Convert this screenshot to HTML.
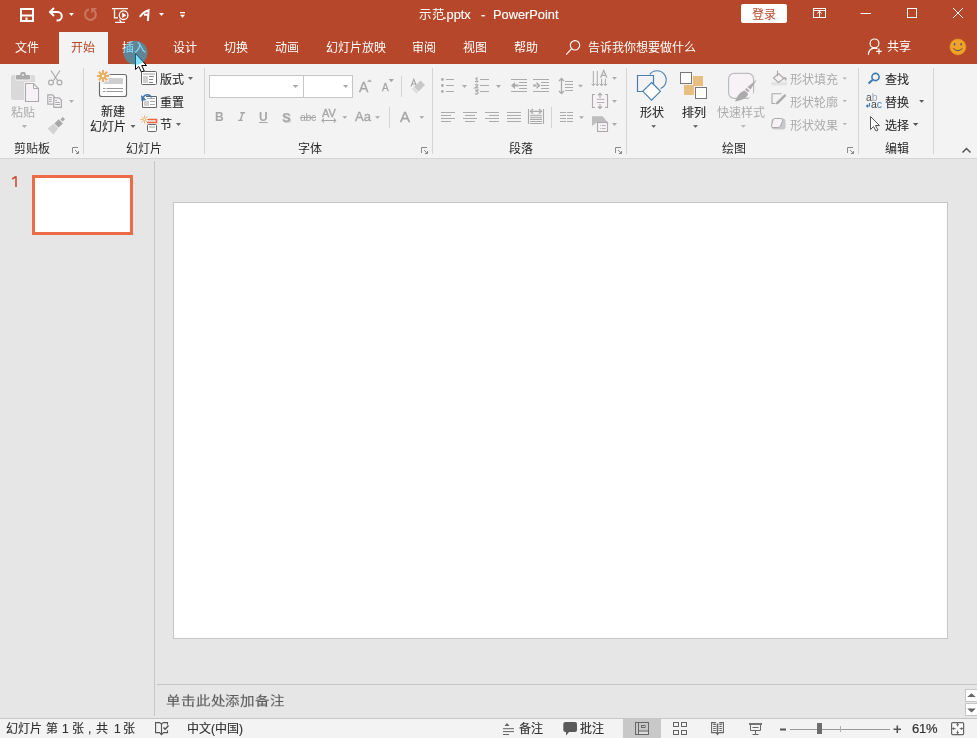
<!DOCTYPE html>
<html lang="zh-CN">
<head>
<meta charset="utf-8">
<style>
*{margin:0;padding:0;box-sizing:border-box}
html,body{width:977px;height:738px;overflow:hidden;background:#e6e6e6;font-family:"Liberation Sans",sans-serif;position:relative}
.a{position:absolute}
.t{position:absolute;white-space:nowrap;line-height:1;will-change:transform}
#ov{position:absolute;left:0;top:0;width:977px;height:738px;overflow:visible}
.tab{color:#fff;font-size:12px;top:42px}
.gl{font-size:12px;color:#2b2b2b;top:143px}
.rb{font-size:12px;color:#2b2b2b;-webkit-text-stroke:0.12px}
.dis{font-size:12px;color:#ababab}
.st{font-size:12px;color:#333;top:723px;-webkit-text-stroke:0.15px}
</style>
</head>
<body>
<!-- panels -->
<div class="a" style="left:0;top:0;width:977px;height:64px;background:#b7472a"></div>
<div class="a" style="left:0;top:64px;width:977px;height:95px;background:#f3f3f3;border-bottom:1px solid #d5d5d5"></div>
<div class="a" style="left:59px;top:32px;width:49px;height:33px;background:#f3f3f3"></div>
<div class="a" style="left:741px;top:4px;width:46px;height:19px;background:#fff;border-radius:2px"></div>

<!-- slide pane -->
<div class="a" style="left:154px;top:161px;width:1px;height:555px;background:#c6c6c6"></div>
<div class="a" style="left:32px;top:175px;width:101px;height:60px;background:#fff;border:3px solid #ee6b48"></div>
<div class="a" style="left:173px;top:202px;width:775px;height:437px;background:#fff;border:1px solid #c6c6c6"></div>
<div class="a" style="left:157px;top:684px;width:820px;height:1px;background:#c6c6c6"></div>
<div class="a" style="left:0;top:718px;width:977px;height:20px;background:#f3f3f3;border-top:1px solid #c6c6c6"></div>
<div class="a" style="left:623px;top:719px;width:38px;height:19px;background:#c8c8c8"></div>
<!-- notes scroll buttons -->
<div class="a" style="left:965px;top:689px;width:13px;height:13px;background:#fff;border:1px solid #c6c6c6"></div>
<div class="a" style="left:965px;top:703px;width:13px;height:13px;background:#fff;border:1px solid #c6c6c6"></div>
<!-- ribbon inputs -->
<div class="a" style="left:209px;top:75px;width:95px;height:23px;background:#fff;border:1px solid #c6c6c6"></div>
<div class="a" style="left:303px;top:75px;width:50px;height:23px;background:#fff;border:1px solid #c6c6c6"></div>

<svg id="ov" viewBox="0 0 977 738">
<!-- ===== title bar icons ===== -->
<g fill="none" stroke="#fff">
 <rect x="21" y="9" width="12" height="12" stroke-width="2"/>
 <path d="M22 15.5H32 M26.5 17.5V21" stroke-width="2"/>
 <path d="M50 12H57.5A4.3 4.3 0 0 1 57.5 20.6H56.5" stroke-width="2"/>
 <path d="M54 8L50 12L54 16" stroke-width="2"/>
 <path d="M88.9 9.3A5.4 5.4 0 1 0 94.3 10.7" stroke="rgba(255,255,255,0.25)" stroke-width="2.2"/>
 <path d="M112 8.7H128 M114.5 9.5V17.8H118 M115 22.3H125 M119.5 19.5L121 22" stroke-width="1.3"/>
 <circle cx="123.6" cy="15.2" r="4.3" stroke-width="1.3"/>
 <path d="M139.8 16.8Q143.5 11.8 148.6 10.2L147.9 21M144 14.8H148.3" stroke-width="2"/>
 <path d="M860.5 13.5H871" stroke-width="1"/>
 <rect x="907.5" y="8.5" width="9" height="9" stroke-width="1"/>
 <path d="M953 8L963 18M963 8L953 18" stroke-width="1"/>
 <rect x="813.5" y="8.5" width="12" height="9" stroke-width="1"/>
 <path d="M813.5 10.5H825.5 M819.5 17.5V11 M817.4 13.6L819.5 11.2L821.6 13.6" stroke-width="1"/>
</g>
<g fill="#fff">
 <path d="M122.2 12.5L126.3 15.2L122.2 17.9Z"/>
 <path d="M91.1 8.1H97.1L91.1 13.5Z" fill="rgba(255,255,255,0.25)"/>
 <path d="M69 13H74L71.5 16Z"/>
 <path d="M159 13H164L161.5 16Z"/>
 <rect x="180" y="12" width="5" height="1.3"/>
 <path d="M180 14.8H185L182.5 17.8Z"/>
</g>

<!-- share person icon -->
<g fill="none" stroke="#fff" stroke-width="1.2">
 <circle cx="874.5" cy="43.4" r="4.4"/>
 <path d="M868.3 54.8C868.8 50.5 871.2 48.2 874.5 48.2C876.2 48.2 877.6 48.8 878.6 49.6"/>
 <path d="M879 48.5V54.3M876.1 51.4H881.9" stroke="#b7472a" stroke-width="3.2"/>
 <path d="M879 48.6V54.2M876.2 51.4H881.8"/>
</g>
<!-- smiley -->
<circle cx="957.9" cy="46.9" r="8" fill="#f0a32a" stroke="#e08f1c" stroke-width="0.6"/>
<ellipse cx="954.6" cy="44.3" rx="0.8" ry="1.2" fill="#4a5a70"/>
<ellipse cx="961.2" cy="44.3" rx="0.8" ry="1.2" fill="#4a5a70"/>
<path d="M953.3 48.3Q957.9 53 962.5 48.3" fill="none" stroke="#5a4a40" stroke-width="1"/>
<!-- search magnifier -->
<g fill="none" stroke="#fff" stroke-width="1.15">
 <circle cx="575" cy="45.3" r="4.7"/>
 <path d="M571.6 48.7L566.2 54.6"/>
</g>

<!-- ===== ribbon separators ===== -->
<g fill="#d4d4d4">
 <rect x="83" y="68" width="1" height="86"/>
 <rect x="204" y="68" width="1" height="86"/>
 <rect x="432" y="68" width="1" height="86"/>
 <rect x="626" y="68" width="1" height="86"/>
 <rect x="858" y="68" width="1" height="86"/>
 <rect x="933" y="68" width="1" height="86"/>
 <rect x="401" y="76" width="1" height="21"/>
 <rect x="389" y="107" width="1" height="21"/>
 <rect x="551" y="107" width="1" height="21"/>
</g>
<!-- dialog launchers -->
<g fill="none" stroke="#8a8a8a" stroke-width="1">
 <path d="M72.5 153V147.5H78"/><path d="M75 150L78.5 153.5M78.5 151V153.5H76"/>
 <path d="M421.5 153V147.5H427"/><path d="M424 150L427.5 153.5M427.5 151V153.5H425"/>
 <path d="M615.5 153V147.5H621"/><path d="M618 150L621.5 153.5M621.5 151V153.5H619"/>
 <path d="M847.5 153V147.5H853"/><path d="M850 150L853.5 153.5M853.5 151V153.5H851"/>
</g>
<!-- collapse caret -->
<path d="M962.5 152.5L966.5 148.5L970.5 152.5" fill="none" stroke="#555" stroke-width="1.5"/>

<!-- ===== clipboard group ===== -->
<rect x="11" y="75" width="24" height="25" rx="2" fill="#d9d9d9"/>
<rect x="15.5" y="73" width="15" height="7.5" fill="#f3f3f3"/>
<rect x="16" y="75" width="14" height="4.5" rx="0.8" fill="#ababab"/>
<rect x="20.3" y="72" width="5.4" height="4" rx="1.5" fill="#ababab"/>
<circle cx="23" cy="75" r="0.9" fill="#f3f3f3"/>
<path d="M25.5 83.5H33.5L38.5 88.5V101.5H25.5Z" fill="#f6f2f6" stroke="#f3f3f3" stroke-width="3"/>
<path d="M25.5 83.5H33.5L38.5 88.5V101.5H25.5Z" fill="#f6f2f6" stroke="#ababab" stroke-width="1.1"/>
<path d="M33.5 83.5V88.5H38.5" fill="none" stroke="#ababab" stroke-width="1"/>
<path d="M21.8 125H27L24.4 128Z" fill="#b0b0b0"/>
<g fill="none" stroke="#ababab" stroke-width="1.2">
 <path d="M51 70.5L57.5 80.5M60 70.5L53.5 80.5"/>
 <circle cx="51" cy="82.5" r="2.4"/><circle cx="59.5" cy="82.5" r="2.4"/>
</g>
<path d="M47.8 94.8H52.5L54.2 96.5V104.2H47.8Z" fill="#f6f2f6" stroke="#ababab" stroke-width="1.2"/>
<path d="M53.8 97.8H59.2L61.4 100V107.4H53.8Z" fill="#f6f2f6" stroke="#ababab" stroke-width="1.2"/>
<path d="M49 97.5H51.8M49 99.5H51.8M49 101.5H51.8M55.2 100.5H57M55.2 102.5H60M55.2 104.5H60" stroke="#ababab" stroke-width="1"/>
<path d="M69 100H74L71.5 103Z" fill="#b0b0b0"/>
<g transform="translate(0.5 2) rotate(-45 56 123.5)">
 <rect x="63" y="122" width="3.5" height="3" fill="#a8a8a8"/>
 <rect x="56" y="120.5" width="6" height="6" fill="#a8a8a8"/>
 <path d="M55.2 120.3V126.7L47.5 127.8V119.2Z" fill="#d2d2d2"/>
</g>

<!-- ===== slides group ===== -->
<rect x="99.5" y="74.5" width="27" height="22" rx="2" fill="#fff" stroke="#6e6e6e" stroke-width="1.2"/>
<rect x="103" y="78" width="20" height="6" fill="#cfcfcf"/>
<path d="M103 88.5H105.5M106.5 88.5H123M103 91.5H105.5M106.5 91.5H123" stroke="#9a9a9a" stroke-width="1"/>
<g stroke="#f3f3f3" stroke-width="3.6" fill="none" stroke-linecap="round">
 <circle cx="103" cy="76" r="2.4" fill="#f3f3f3"/>
 <path d="M103 70V73M103 79V82M97 76H100M106 76H109M98.8 71.8L100.9 73.9M105.1 78.1L107.2 80.2M107.2 71.8L105.1 73.9M100.9 78.1L98.8 80.2"/>
</g>
<g stroke="#e8b060" stroke-width="2" fill="none">
 <circle cx="103" cy="76" r="2.3" fill="#faf6f0"/>
 <path d="M103 70V73.5M103 78.5V82M97 76H100.5M105.5 76H109M98.8 71.8L101.2 74.2M104.8 77.8L107.2 80.2M107.2 71.8L104.8 74.2M101.2 77.8L98.8 80.2"/>
</g>
<path d="M130.5 125H135.5L133 128Z" fill="#666"/>
<!-- layout -->
<rect x="141.5" y="71.5" width="15" height="13" rx="1" fill="#fff" stroke="#666" stroke-width="1"/>
<rect x="143" y="73" width="12" height="2" fill="#cfcfcf"/>
<rect x="143" y="76" width="5" height="7" fill="#cfcfcf"/>
<path d="M149 76.5H154M149 79.5H153M149 82.5H153" stroke="#888" stroke-width="1"/>
<path d="M188 77H193L190.5 80Z" fill="#666"/>
<!-- reset -->
<path d="M146 96.5H156.5V107.5H142.5V100.5" fill="#fff" stroke="#666" stroke-width="1"/>
<rect x="144" y="101" width="5" height="5" fill="#cfcfcf"/>
<path d="M147 98.5H155M150 101.5H155M150 104.5H155" stroke="#aaa" stroke-width="1"/>
<path d="M151.5 97.5C150 94 145.5 93.5 143 97.5" fill="none" stroke="#3a78b0" stroke-width="1.6"/>
<path d="M141 95L141.5 101L146.5 100Z" fill="#3a78b0"/>
<!-- section -->
<g stroke="#e8b060" stroke-width="1" fill="none">
 <circle cx="144.5" cy="119.5" r="1.3"/>
 <path d="M144.5 115.5V117.5M144.5 121.5V123.5M140.5 119.5H142.5M146.5 119.5H148.5M141.7 116.7L143 118M146 121L147.3 122.3M147.3 116.7L146 118M143 121L141.7 122.3"/>
</g>
<path d="M148 119.5H156.5V122.5H147" fill="none" stroke="#f0643c" stroke-width="1.5"/>
<rect x="147.5" y="124.5" width="9" height="7" rx="1" fill="#fff" stroke="#666" stroke-width="1"/>
<rect x="149" y="126" width="6" height="2" fill="#cfcfcf"/>
<path d="M176 123H181L178.5 126Z" fill="#666"/>

<!-- ===== font group ===== -->
<path d="M240.3 112.8H245M238 120.4H242.7M242.9 112.8L240.3 120.4" fill="none" stroke="#a6a6a6" stroke-width="1.4"/>
<path d="M411 86.5L413.8 79.3L416.6 86.5M412.1 84H415.5" fill="none" stroke="#a6a6a6" stroke-width="1.1"/>
<path d="M420.5 80.5L425 85L418.5 91.5L414 87Z" fill="#c8c8c8"/>
<path d="M413.5 87.5L418 92L416.5 93.5L412 89Z" fill="#dadada"/>
<g fill="#a6a6a6">
 <path d="M292.7 85H298.3L295.5 88Z"/>
 <path d="M343 85H348.2L345.6 88Z"/>
 <path d="M367 81.8L369.5 79.4L372 81.8Z"/>
 <path d="M388.7 79H393.9L391.3 82.2Z"/>
 <path d="M342.3 116.2H347.2L344.8 118.7Z"/>
 <path d="M375 116.2H380L377.5 118.7Z"/>
 <path d="M419.2 116.2H424.3L421.8 118.7Z"/>
</g>

<!-- ===== paragraph group ===== -->
<g fill="#ababab">
 <circle cx="442.4" cy="79.5" r="1.4"/><circle cx="442.4" cy="85.5" r="1.4"/><circle cx="442.4" cy="91.5" r="1.4"/>
 <path d="M462 85H467L464.5 88Z"/>
 <path d="M496 85H501L498.5 88Z"/>
 <path d="M578 84.8H583L580.5 87.6Z"/>
 <path d="M612 77H617L614.5 79.8Z"/>
 <path d="M612 100H617L614.5 102.8Z"/>
 <path d="M612 123H617L614.5 126Z"/>
 <path d="M579 116.2H584L581.5 119Z"/>
 <path d="M511 85.4L515 82V89Z M514.5 84.4H518.5V86.4H514.5Z"/>
 <path d="M540.5 85.4L536.5 81.8V89Z M533 84.4H537.5V86.4H533Z"/>
 <path d="M592 116.2H602.5L607.5 122H597.5L592 126Z" fill="#bdbdbd"/>
</g>
<g stroke="#ababab" stroke-width="1" fill="none">
 <path d="M446 79.5H454M446 85.5H454M446 91.5H454"/>
 <path d="M480 79.5H489M480 85.5H489M480 91.5H489"/>
<g stroke-width="1.25">
 <path d="M475.3 79L476.9 78V81.8M475 81.6H478.4"/>
 <path d="M475 84.9Q476.8 83.7 477.8 84.8Q478.3 85.8 475.2 87.8H478.4"/>
 <path d="M475 90.2H478L476.4 91.7Q478.4 91.9 478.1 93Q477.5 94.4 475 93.9"/>
 </g>
 <path d="M511 79.5H527M519 82.5H527M519 85.5H527M519 88.5H527M511 91.5H527"/>
 <path d="M533 79.5H549M541 82.5H549M541 85.5H549M541 88.5H549M533 91.5H549"/>
 <path d="M565 81.5H573M565 84.5H573M565 87.5H573M565 90.5H573"/>
 <path d="M441 112.5H455M441 115.5H451M441 118.5H455M441 121.5H451"/>
 <path d="M463 112.5H477M465 115.5H475M463 118.5H477M465 121.5H475"/>
 <path d="M485 112.5H499M489 115.5H499M485 118.5H499M489 121.5H499"/>
 <path d="M507 112.5H521M507 115.5H521M507 118.5H521M507 121.5H521"/>
 <path d="M528.5 109V124M543.5 109V124M530 115.2H542M530 117.3H542M530 119.4H542M530 121.5H542M530 123.5H542" stroke-width="1.1"/>
 <path d="M530.5 111.3H541.5M533 109L530.5 111.3L533 113.6M539 109L541.5 111.3L539 113.6" stroke-width="1.3"/>
 <path d="M560 112.5H566M567 112.5H573M560 115.5H566M567 115.5H573M560 118.5H566M567 118.5H573M560 121.5H566M567 121.5H573"/>
 <path d="M561.5 78.5V93.5M559 81L561.5 78.5L564 81M559 91L561.5 93.5L564 91" stroke-width="1.3"/>
 <path d="M593.3 71V85.5M597.3 71V85.5M601.6 78.8V85.5M605.4 78.8V85.5M591.6 83.8L593.3 85.8L595 83.8M595.6 83.8L597.3 85.8L599 83.8M599.9 83.8L601.6 85.8L603.3 83.8M603.7 83.8L605.4 85.8L607.1 83.8"/>
 <path d="M600.5 77.8L603.7 70.5L606.9 77.8M601.6 75.3H605.8" stroke-width="1.2"/>
</g>
<rect x="593" y="95" width="14" height="12" fill="#f6f2f6"/>
<g stroke="#ababab" stroke-width="1.1" fill="none">
 <path d="M595 94.5H592.5V107.5H595M605 94.5H607.5V107.5H605"/>
 <path d="M600 93.5V98M598 95.3L600 93.3L602 95.3M600 104V108.5M598 106.5L600 108.5L602 106.5"/>
 <path d="M596.8 99.4H604.5M596.8 102.5H604.5" stroke-width="0.9"/>
</g>
<rect x="597.5" y="122.5" width="10" height="9" fill="#f6f2f6" stroke="#ababab" stroke-width="1.1"/>
<path d="M600 125.5H600.8M602 125.5H605.5M600 128.5H600.8M602 128.5H605.5" stroke="#ababab" stroke-width="0.9"/>

<!-- ===== drawing group ===== -->
<g fill="none" stroke="#4a7fb0" stroke-width="1.2">
 <path d="M644 91.5H637.5V75.5H653.5V84"/>
 <path d="M649.7 74.4A9.2 9.2 0 1 1 660.5 88.5" stroke-width="1.1"/>
 <path d="M651.6 82.5L660.4 91.3L651.6 100.1L642.8 91.3Z" fill="#fff"/>
</g>
<path d="M651.3 125.3H656L653.65 127.8Z" fill="#555"/>
<rect x="693" y="76" width="10" height="10" fill="#e8bf80"/>
<rect x="684" y="85" width="10" height="10" fill="#e8bf80"/>
<rect x="680.5" y="72.5" width="11" height="11" fill="#fff" stroke="#777" stroke-width="1"/>
<rect x="695.5" y="87.5" width="11" height="11" fill="#fff" stroke="#777" stroke-width="1"/>
<path d="M693 125.3H698L695.5 127.8Z" fill="#555"/>
<rect x="728.6" y="73.4" width="25" height="25" rx="5.5" fill="#f6f2f6" stroke="#bdbdbd" stroke-width="1.2"/>
<path d="M747 101L757 89L757 102Z" fill="#f3f3f3"/>
<path d="M756.8 79.5L750.5 89.5L747.5 87Z" fill="#ababab"/>
<path d="M746.5 88L749.5 90.8L748 92.3L745 89.5Z" fill="#ababab"/>
<path d="M744.5 90.5L748 93.5C747.5 97 745 99.5 735 101.5C737 96 740 92 744.5 90.5Z" fill="#ababab"/>
<path d="M740.7 125.1H746L743.35 127.7Z" fill="#bbb"/>
<g fill="#b8b8b8">
 <path d="M842.4 77.5H847L844.7 79.7Z"/>
 <path d="M842.4 100H847L844.7 102.2Z"/>
 <path d="M842.4 123H847L844.7 125.2Z"/>
</g>
<rect x="771.2" y="82.2" width="15.8" height="3.2" fill="#e3e3e3"/>
<path d="M778.5 73.5L783.8 78.5L778.5 82.5L773.5 78Z" fill="#f6f2f6" stroke="#ababab" stroke-width="1.1"/>
<path d="M777.5 70.5V76.5" fill="none" stroke="#ababab" stroke-width="1.1"/>
<path d="M783 76.5L786.8 78L786 81.5Z" fill="#ababab"/>
<path d="M781.5 93.8H772V103.5H775.5" fill="none" stroke="#ababab" stroke-width="1.1"/>
<path d="M785.5 94.8L777.5 102.8" fill="none" stroke="#ababab" stroke-width="2.4"/>
<path d="M776.5 101.5L778.8 103.8L775.8 104.5Z" fill="#ababab"/>
<path d="M774.5 118.5H782.5Q785.5 118.5 785.5 121.5V126.5Q785.5 129.5 782.5 129.5H774.5Q771.5 129.5 771.5 126.5V121.5Q771.5 118.5 774.5 118.5Z" fill="#c8c8c8"/>
<path d="M774.5 118.5H781Q783.5 118.5 782.5 121L780.5 126Q779.8 127.5 778 127.5H773Q771 127.5 771.6 125.5L773 120Q773.4 118.5 774.5 118.5Z" fill="#f6f2f6" stroke="#ababab" stroke-width="1"/>

<!-- ===== editing group ===== -->
<g fill="none" stroke="#3c7ab8" stroke-width="1.6">
 <circle cx="875.5" cy="77" r="3.6"/>
 <path d="M872.5 80L868.5 83.5" stroke-width="2.2"/>
</g>
<path d="M919.2 100H924L921.6 102.8Z" fill="#555"/>
<path d="M913 123H918.3L915.65 126Z" fill="#555"/>
<path d="M870.5 116.5V129.5L873.5 126.5L876 131L878 130L875.5 125.5H879.5Z" fill="#fff" stroke="#555" stroke-width="1"/>
<path d="M869.5 103V106H866.5M868 104.6L866.5 106L868 107.4" fill="none" stroke="#3c7ab8" stroke-width="1.1"/>

<path d="M16 176.3V187M16 176.5L12.2 179" fill="none" stroke="#c9502e" stroke-width="1.6"/>
<!-- ===== status bar icons ===== -->
<g fill="none" stroke="#666" stroke-width="1">
 <path d="M160 732.6H155.6V722.6H159.8L161.5 724.3L163.2 722.6H167.5V724.8M167.5 730.2V732.6H163M161.5 724.3V734.5M160 733L161.5 734.6L163 733" stroke="#555" stroke-width="1.1"/>
 <path d="M163.5 727.4L165.2 729.2L168.5 725.5" stroke="#555" stroke-width="1.5"/>
 <path d="M503 728.7H514M503 731.6H514M503 734.5H509"/>
 <rect x="638.5" y="731.5" width="10" height="2.5" fill="#dcdcdc" stroke="none"/>
 <rect x="635.5" y="722.5" width="13" height="12"/>
 <path d="M638.5 722.5V734.5M638.5 731H648.5"/>
 <rect x="641.5" y="725.5" width="3.5" height="2"/>
 <rect x="673.5" y="722.5" width="5" height="4"/><rect x="681.5" y="722.5" width="5" height="4"/>
 <rect x="673.5" y="730.5" width="5" height="4"/><rect x="681.5" y="730.5" width="5" height="4"/>
 <path d="M715.8 722.6H711.6V732.6H716.2L717.5 734.6L718.8 732.6H723.4V722.6H719.2" stroke-width="1.1"/>
 <path d="M717.5 723.5V734M713.2 724.4H715.8M713.2 726.5H715.8M713.2 728.5H715.8M713.2 730.5H715.8M719.3 724.4H721.9M719.3 726.5H721.9M719.3 728.5H721.9M719.3 730.5H721.9" stroke-width="1.1"/>
 <path d="M716.3 724L717.5 725L718.7 724M716.3 726L717.5 727L718.7 726M716.3 728L717.5 729L718.7 728M716.3 730L717.5 731L718.7 730" stroke-width="0.8"/>
 <path d="M749 724H762" stroke-width="1.8"/>
 <path d="M750.5 725V730.5H760.5V725M752.5 727.5H758.5M755.5 730.5V734.5M752.5 734.5H758.5"/>
 <rect x="951.6" y="722.6" width="12" height="12" rx="1" stroke-width="1.2" fill="#fafafa"/>
 <path d="M957.6 722.6V726.5M956.4 724.6H958.8M957.6 734.6V730.5M956.4 732.6H958.8M951.6 728.6H955.5M953.6 727.4V729.8M963.6 728.6H959.7M961.6 727.4V729.8" stroke-width="1"/>
</g>
<path d="M565.5 722H575Q577 722 577 724V730Q577 732 575 732H569L566 735.5V732H565.5Q563.3 732 563.3 730V724Q563.3 722 565.5 722Z" fill="#595959"/>
<path d="M504.5 725.9L507 723L509.5 725.9Z" fill="#666"/>
<rect x="780" y="728.5" width="6" height="2" fill="#555"/>
<rect x="790" y="729" width="100" height="1" fill="#9a9a9a"/>
<rect x="840" y="726" width="1" height="6" fill="#b0b0b0"/>
<rect x="817" y="723" width="5" height="11" fill="#6d6d6d"/>
<path d="M893.5 729.3H901M897.3 725.5V733" stroke="#555" stroke-width="1.6"/>

<path d="M967.2 697L971.5 693.2L975.8 697Z M967.2 708.6L971.5 712.4L975.8 708.6Z" fill="#666"/>

</svg>

<!-- ===== text ===== -->
<div class="t tab" style="left:15px">文件</div>
<div class="t tab" style="left:71px;color:#b7472a">开始</div>
<div class="t tab" style="left:122px">插入</div>
<div class="t tab" style="left:173px">设计</div>
<div class="t tab" style="left:224px">切换</div>
<div class="t tab" style="left:275px">动画</div>
<div class="t tab" style="left:326px">幻灯片放映</div>
<div class="t tab" style="left:412px">审阅</div>
<div class="t tab" style="left:463px">视图</div>
<div class="t tab" style="left:514px">帮助</div>
<div class="t tab" style="left:588px">告诉我你想要做什么</div>
<div class="t tab" style="left:887px;top:41px">共享</div>

<div class="t" style="left:419px;top:9px;font-size:12.5px;color:#fff">示范</div>
<div class="t" style="left:443px;top:9px;font-size:12.8px;color:#fff;-webkit-text-stroke:0.15px">.pptx</div>
<div class="t" style="left:481px;top:9px;font-size:12.8px;color:#fff;-webkit-text-stroke:0.15px">-</div>
<div class="t" style="left:493px;top:9px;font-size:12.8px;color:#fff;-webkit-text-stroke:0.15px">PowerPoint</div>
<div class="t" style="left:752px;top:9px;font-size:12px;color:#b7472a">登录</div>

<!-- ribbon text -->
<div class="t dis" style="left:11px;top:107px">粘贴</div>
<div class="t gl" style="left:14px">剪贴板</div>
<div class="t rb" style="left:101px;top:106px">新建</div>
<div class="t rb" style="left:90px;top:121px">幻灯片</div>
<div class="t rb" style="left:160px;top:74px">版式</div>
<div class="t rb" style="left:160px;top:97px">重置</div>
<div class="t rb" style="left:160px;top:119px">节</div>
<div class="t gl" style="left:126px">幻灯片</div>
<div class="t gl" style="left:298px">字体</div>
<div class="t gl" style="left:509px">段落</div>
<div class="t gl" style="left:722px">绘图</div>
<div class="t gl" style="left:885px">编辑</div>
<div class="t rb" style="left:640px;top:107px">形状</div>
<div class="t rb" style="left:682px;top:107px">排列</div>
<div class="t dis" style="left:717px;top:107px">快速样式</div>
<div class="t dis" style="left:790px;top:74px">形状填充</div>
<div class="t dis" style="left:790px;top:97px">形状轮廓</div>
<div class="t dis" style="left:790px;top:120px">形状效果</div>
<div class="t rb" style="left:885px;top:74px">查找</div>
<div class="t rb" style="left:885px;top:97px">替换</div>
<div class="t rb" style="left:885px;top:120px">选择</div>

<!-- font group glyph buttons -->
<div class="t" style="left:215px;top:111px;font-size:12px;font-weight:bold;color:#a6a6a6">B</div>

<div class="t" style="left:259px;top:111px;font-size:12px;font-weight:bold;color:#a6a6a6;text-decoration:underline">U</div>
<div class="t" style="left:282px;top:111px;font-size:13px;font-weight:bold;color:#a6a6a6;text-shadow:1px 1px 1px #ccc">S</div>
<div class="t" style="left:300px;top:112px;font-size:10.5px;letter-spacing:-0.3px;color:#a6a6a6;text-decoration:line-through">abc</div>
<div class="t" style="left:322px;top:108px;font-size:11px;color:#a6a6a6;-webkit-text-stroke:0.35px">AV</div>
<div class="t" style="left:321px;top:115px;font-size:11px;color:#a6a6a6">⟷</div>
<div class="t" style="left:355px;top:110px;font-size:13px;color:#a6a6a6;-webkit-text-stroke:0.35px">Aa</div>
<div class="t" style="left:400px;top:109px;font-size:15px;color:#a6a6a6;-webkit-text-stroke:0.4px">A</div>
<div class="t" style="left:359px;top:80px;font-size:14px;color:#a6a6a6;-webkit-text-stroke:0.3px">A</div>
<div class="t" style="left:382px;top:83px;font-size:10px;color:#a6a6a6;-webkit-text-stroke:0.3px">A</div>
<div class="t" style="left:865.5px;top:92px;font-size:10.5px;color:#555">a<span style="color:#98a8ba">b</span></div>
<div class="t" style="left:871px;top:99px;font-size:10.5px;color:#444">a<span style="color:#3c7ab8">c</span></div>

<!-- pane text -->

<div class="t" style="left:166px;top:692.5px;font-size:14.5px;letter-spacing:0.85px;color:#5c5c5c;-webkit-text-stroke:0.15px;transform:scaleY(0.86);transform-origin:0 100%">单击此处添加备注</div>

<!-- status text -->
<div class="t st" style="left:6px">幻灯片</div><div class="t st" style="left:45.5px">第</div><div class="t st" style="left:62px">1</div><div class="t st" style="left:71.5px">张</div><div class="t st" style="left:88px">,</div><div class="t st" style="left:96px">共</div><div class="t st" style="left:113.5px">1</div><div class="t st" style="left:123px">张</div>
<div class="t st" style="left:187px">中文(中国)</div>
<div class="t st" style="left:519px">备注</div>
<div class="t st" style="left:580px">批注</div>
<div class="t" style="left:912px;top:722px;font-size:13px;color:#333;-webkit-text-stroke:0.2px;letter-spacing:-0.2px">61%</div>
<svg style="position:absolute;left:0;top:0;width:977px;height:738px" viewBox="0 0 977 738">
<path d="M135.5 53.5V69.5L138.8 66.5L141.4 72L144.2 70.7L141.7 65.5H146.5Z" fill="#fff" stroke="#000" stroke-width="1" stroke-linejoin="miter"/>
<circle cx="135.5" cy="52.7" r="12" fill="rgba(10,195,255,0.5)"/>
</svg>
</body>
</html>
